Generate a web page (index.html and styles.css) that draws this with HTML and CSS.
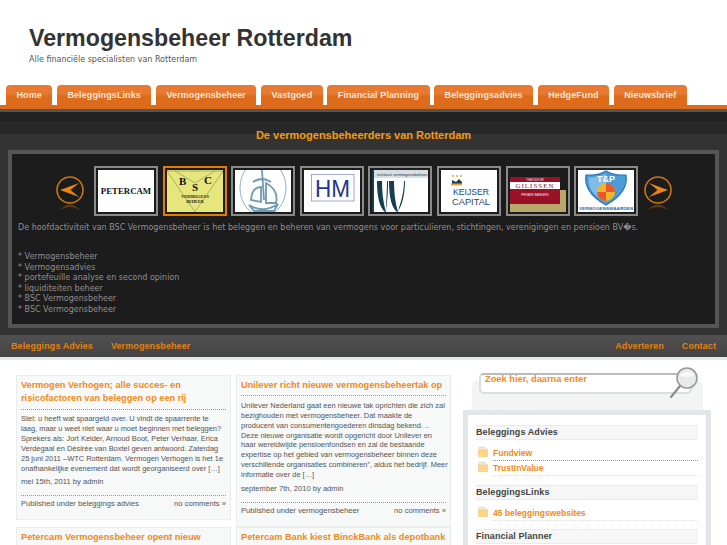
FILE: index.html
```html
<!DOCTYPE html>
<html lang="en">
  <head>
    <meta charset="UTF-8" />
    <title>Vermogensbeheer Rotterdam</title>
    <link rel="stylesheet" href="styles.css">
  </head>
  <body>
    <div class="page">
      <div class="header">
        <h1>Vermogensbeheer Rotterdam</h1>
        <p>Alle financiële specialisten van Rotterdam</p>
      </div>

      <ul class="tabs">
        <li>Home</li>
        <li>BeleggingsLinks</li>
        <li>Vermogensbeheer</li>
        <li>Vastgoed</li>
        <li>Financial Planning</li>
        <li>Beleggingsadvies</li>
        <li>HedgeFund</li>
        <li>Nieuwsbrief</li>
      </ul>

      <div class="featured">
        <h2>De vermogensbeheerders van Rotterdam</h2>
        <div class="featured-box">
          <div class="carousel">
            <svg class="arrow" width="30" height="36" viewBox="0 0 30 36">
              <circle cx="15" cy="15" r="13" fill="none" stroke="#c9770f" stroke-width="1.6" />
              <path d="M5 15 L24 8 L15.5 15 L24 22 Z" fill="#e8831a" />
              <path d="M5 35 Q15 24 25 35 Q15 29 5 35 Z" fill="#5a3a14" />
            </svg>
            <div class="logos">
              <div class="logo">
                <svg viewBox="0 0 56 42"><text x="28" y="24" text-anchor="middle" class="t-petercam">PETERCAM</text></svg>
              </div>
              <div class="logo logo-active">
                <svg viewBox="0 0 56 42">
                  <rect width="56" height="42" fill="#e6e67c" />
                  <path d="M0 1 H56 L28 42 Z M8 1 L28 13 L48 1 M24 1 L28 -2 L32 1" fill="none" stroke="#8a8a50" stroke-width="0.6" />
                  <text x="12" y="15" class="t-bsc">B</text>
                  <text x="25" y="21" class="t-bsc">S</text>
                  <text x="37" y="14" class="t-bsc">C</text>
                  <text x="28" y="27.5" text-anchor="middle" class="t-bsc-sub">VERMOGENS</text>
                  <text x="28" y="32.5" text-anchor="middle" class="t-bsc-sub">BEHEER</text>
                </svg>
              </div>
              <div class="logo">
                <svg viewBox="0 0 56 42">
                  <ellipse cx="28" cy="18" rx="23" ry="28" fill="none" stroke="#8fb2c6" stroke-width="1" />
                  <path d="M27 0 L29 30 M18 12 Q27 6 36 12 M16 30 Q17 17 26 17 L26 32 Z M31 13 Q44 20 41 33 L31 33 Z M14 35 Q28 44 43 34 L39 41 H19 Z" fill="none" stroke="#6f9ab3" stroke-width="1.8" />
                </svg>
              </div>
              <div class="logo">
                <svg viewBox="0 0 56 42">
                  <rect x="7.5" y="4.5" width="42.5" height="26.5" fill="none" stroke="#8a94c8" stroke-width="0.8" />
                  <text x="11" y="27" textLength="35" lengthAdjust="spacingAndGlyphs" class="t-hm">HM</text>
                </svg>
              </div>
              <div class="logo">
                <svg viewBox="0 0 56 42">
                  <rect width="56" height="8" fill="#d5e0e4" />
                  <text x="5" y="5.5" class="t-ivv-top">instituut vermogensbeheer</text>
                  <rect x="0" y="0" width="2" height="42" fill="#143f50" />
                  <path d="M5 11 C5 28 8 38 13 42 L14 42 C11 32 10 22 10 11 Z M17 11 C17 28 20 38 25 42 L26 42 C23 32 22 22 22 11 Z M15 11 L16 11 C16 24 15 34 14 41 C14 32 15 20 15 11 Z M32 11 L33 11 C33 24 30 36 26 41 C29 32 32 22 32 11 Z" fill="#143f50" />
                </svg>
              </div>
              <div class="logo">
                <svg viewBox="0 0 56 42">
                  <path d="M11 15 V10 L15 12 L18 9 L21 12 V15 Z" fill="#1f3a5a" />
                  <rect x="10" y="13.5" width="11" height="2" fill="#e2a92c" />
                  <circle cx="12" cy="6" r="1" fill="#e2a92c" />
                  <circle cx="16" cy="6" r="1" fill="#e2a92c" />
                  <circle cx="20" cy="6" r="1" fill="#e2a92c" />
                  <text x="12" y="24.5" textLength="36" lengthAdjust="spacingAndGlyphs" class="t-keijser">KEIJSER</text>
                  <text x="11" y="35" textLength="38" lengthAdjust="spacingAndGlyphs" class="t-keijser">CAPITAL</text>
                </svg>
              </div>
              <div class="logo logo-dark">
                <svg viewBox="0 0 56 42">
                  <rect x="0" y="20" width="56" height="22" fill="#b9a86c" />
                  <rect x="0" y="7" width="50" height="27" fill="#9a1027" />
                  <rect x="0" y="12" width="50" height="7" fill="#fff" />
                  <text x="25" y="10.8" text-anchor="middle" class="t-gil-sm">THEODOOR</text>
                  <text x="25" y="18" text-anchor="middle" class="t-gil">GILISSEN</text>
                  <text x="25" y="26" text-anchor="middle" class="t-gil-sm">PRIVATE BANKERS</text>
                </svg>
              </div>
              <div class="logo">
                <svg viewBox="0 0 56 42">
                  <path d="M8 5 Q20 6 28 1 Q36 6 48 5 Q51 22 28 35 Q5 22 8 5 Z" fill="#4b9bd8" stroke="#2a78bb" stroke-width="1.2" />
                  <path d="M11 7 Q20 8 28 4 L28 32 Q8 22 11 7 Z" fill="#7fbde8" />
                  <text x="28" y="12" text-anchor="middle" class="t-tp">T&amp;P</text>
                  <circle cx="28" cy="22" r="9" fill="#f0b429" />
                  <path d="M28 22 L28 13 A9 9 0 0 1 37 22 Z M28 22 L28 31 A9 9 0 0 1 19 22 Z" fill="#e8582a" />
                  <text x="1" y="40" textLength="54" lengthAdjust="spacingAndGlyphs" class="t-tp-sub">VERMOGENSWAARDEN</text>
                </svg>
              </div>
            </div>
            <svg class="arrow arrow-next" width="30" height="36" viewBox="0 0 30 36">
              <circle cx="15" cy="15" r="13" fill="none" stroke="#c9770f" stroke-width="1.6" />
              <path d="M25 15 L6 8 L14.5 15 L6 22 Z" fill="#e8831a" />
              <path d="M5 35 Q15 24 25 35 Q15 29 5 35 Z" fill="#5a3a14" />
            </svg>
          </div>
          <p class="intro">De hoofdactiviteit van BSC Vermogensbeheer is het beleggen en beheren van vermogens voor particulieren, stichtingen, verenigingen en pensioen BV�s.</p>
          <ul class="services">
            <li>Vermogensbeheer</li>
            <li>Vermogensadvies</li>
            <li>portefeuille analyse en second opinion</li>
            <li>liquiditeiten beheer</li>
            <li>BSC Vermogensbeheer</li>
            <li>BSC Vermogensbeheer</li>
          </ul>
        </div>
      </div>

      <div class="subnav">
        <a>Beleggings Advies</a>
        <a>Vermogensbeheer</a>
        <a class="push">Adverteren</a>
        <a>Contact</a>
      </div>

      <div class="content">
        <div class="posts">
          <div class="post">
            <h3>Vermogen Verhogen; alle succes- en<br />risicofactoren van beleggen op een rij</h3>
            <p>Stel: u heeft wat spaargeld over. U vindt de spaarrente te<br />laag, maar u weet niet waar u moet beginnen met beleggen?<br />Sprekers als: Jort Kelder, Arnoud Boot, Peter Verhaar, Erica<br />Verdegaal en Désirée van Boxtel geven antwoord. Zaterdag<br />25 juni 2011 –WTC Rotterdam. Vermogen Verhogen is het 1e<br />onafhankelijke evenement dat wordt georganiseerd over […]</p>
            <div class="meta">mei 15th, 2011 by admin</div>
            <div class="post-foot"><span>Published under beleggings advies</span><span>no comments »</span></div>
          </div>
          <div class="post">
            <h3>Unilever richt nieuwe vermogensbeheertak op</h3>
            <p>Unilever Nederland gaat een nieuwe tak oprichten die zich zal<br />bezighouden met vermogensbeheer. Dat maakte de<br />producent van consumentengoederen dinsdag bekend. ..<br />Deze nieuwe organisatie wordt opgericht door Unilever en<br />haar wereldwijde pensioenfondsen en zal de bestaande<br />expertise op het gebied van vermogensbeheer binnen deze<br />verschillende organisaties combineren”, aldus het bedrijf. Meer<br />informatie over de […]</p>
            <div class="meta">september 7th, 2010 by admin</div>
            <div class="post-foot"><span>Published under vermogensbeheer</span><span>no comments »</span></div>
          </div>
          <div class="post">
            <h3>Petercam Vermogensbeheer opent nieuw</h3>
          </div>
          <div class="post">
            <h3>Petercam Bank kiest BinckBank als depotbank</h3>
          </div>
        </div>

        <div class="sidebar">
          <div class="search-panel">
            <div class="search">Zoek hier, daarna enter</div>
            <svg class="lens" width="30" height="34" viewBox="0 0 30 34">
              <line x1="11" y1="20" x2="2" y2="31" stroke="#8b8b8b" stroke-width="2.2" stroke-linecap="round" />
              <circle cx="18" cy="12" r="10" fill="#e9ebea" stroke="#9a9a9a" stroke-width="1.6" />
              <path d="M10 9 Q18 3 26 9 Q18 13 10 9 Z" fill="#fff" opacity="0.7" />
            </svg>
          </div>
          <div class="widgets">
            <h4>Beleggings Advies</h4>
            <ul class="links">
              <li>
                <svg width="10" height="11" viewBox="0 0 10 11"><path d="M1 1 H6 L9 3 V5 H1 Z" fill="#efe9da" stroke="#ddd3bd" stroke-width="0.6" /><path d="M0.5 4 H9.5 V10.5 H0.5 Z" fill="#fcd788" stroke="#f0c56c" stroke-width="0.6" /></svg>
                <span>Fundview</span>
              </li>
              <li>
                <svg width="10" height="11" viewBox="0 0 10 11"><path d="M1 1 H6 L9 3 V5 H1 Z" fill="#efe9da" stroke="#ddd3bd" stroke-width="0.6" /><path d="M0.5 4 H9.5 V10.5 H0.5 Z" fill="#fcd788" stroke="#f0c56c" stroke-width="0.6" /></svg>
                <span>TrustInValue</span>
              </li>
            </ul>
            <h4>BeleggingsLinks</h4>
            <ul class="links">
              <li>
                <svg width="10" height="11" viewBox="0 0 10 11"><path d="M1 1 H6 L9 3 V5 H1 Z" fill="#efe9da" stroke="#ddd3bd" stroke-width="0.6" /><path d="M0.5 4 H9.5 V10.5 H0.5 Z" fill="#fcd788" stroke="#f0c56c" stroke-width="0.6" /></svg>
                <span>45 beleggingswebsites</span>
              </li>
            </ul>
            <h4>Financial Planner</h4>
          </div>
        </div>
      </div>
    </div>
  </body>
</html>
```

FILE: styles.css
```css
html,
body {
  margin: 0;
  padding: 0;
  background: #fff;
  overflow: hidden;
}

.page {
  width: 727px;
  height: 545px;
  overflow: hidden;
  font-family: 'Liberation Sans', Arial, sans-serif;
}

.header {
  height: 85px;
  padding-left: 29px;
  box-sizing: border-box;
  padding-top: 24px;
}
.header h1 {
  margin: 0;
  font-size: 23.2px;
  line-height: 28px;
  color: #333;
}
.header p {
  margin: 2px 0 0;
  font-family: 'DejaVu Sans', sans-serif;
  font-size: 8px;
  line-height: 12px;
  color: #555;
}

.tabs {
  display: flex;
  gap: 4.5px;
  margin: 0;
  padding: 0 0 0 6px;
  list-style: none;
  height: 20px;
  border-bottom: 4px solid #dd6b1c;
}
.tabs li {
  padding: 0 10.5px;
  height: 20px;
  line-height: 20px;
  white-space: nowrap;
  border-radius: 4px 4px 0 0;
  background: linear-gradient(#e77a30 0, #e77a30 45%, #dd6b1c 55%, #dd6b1c 100%);
  color: #f3e7dc;
  font-size: 9px;
  font-weight: bold;
  letter-spacing: 0.1px;
}

.featured {
  height: 226px;
  box-sizing: border-box;
  border-top: 3px solid #555;
  background: linear-gradient(#222 0, #222 9px, #282828 9px, #282828 22px, #333 22px, #333 100%);
  padding: 0 8px;
}
.featured h2 {
  margin: 0;
  padding-top: 16px;
  height: 38px;
  box-sizing: border-box;
  text-align: center;
  font-size: 11px;
  line-height: 15px;
  color: #f39a12;
}
.featured-box {
  height: 178px;
  box-sizing: border-box;
  border: 4px solid #555;
  background: #1c1c1c;
  padding: 12px 6px 0;
}

.carousel {
  display: flex;
  align-items: flex-start;
  padding: 0 36px 0 37px;
}
.arrow {
  margin-top: 9px;
  flex: none;
}
.arrow-next {
  margin-left: auto;
}
.logos {
  display: flex;
  gap: 4.6px;
  margin-left: 9px;
}
.logo {
  width: 64px;
  height: 50px;
  box-sizing: border-box;
  border: 2px solid #8a8a8a;
  padding: 2px;
  background: #1c1c1c;
}
.logo svg {
  display: block;
  width: 56px;
  height: 42px;
  background: #fff;
}
.logo-active {
  border-color: #e37b06;
}
.logo-dark svg {
  background: #1c1c1c;
}

.t-petercam { font-family: 'Liberation Serif', serif; font-size: 8.8px; font-weight: bold; fill: #111; }
.t-bsc { font-family: 'Liberation Serif', serif; font-size: 11px; font-weight: bold; fill: #111; }
.t-bsc-sub { font-family: 'Liberation Serif', serif; font-size: 4.2px; font-weight: bold; fill: #222; }
.t-hm { font-family: 'Liberation Sans', sans-serif; font-size: 24px; fill: #1f3592; }
.t-ivv-top { font-family: 'Liberation Sans', sans-serif; font-size: 4.3px; fill: #334; }
.t-keijser { font-family: 'Liberation Sans', sans-serif; font-size: 9px; fill: #2a4564; }
.t-gil { font-family: 'Liberation Serif', serif; font-size: 7px; fill: #8e1a2c; letter-spacing: 1px; }
.t-gil-sm { font-family: 'Liberation Sans', sans-serif; font-size: 3px; fill: #eee; }
.t-tp { font-family: 'Liberation Sans', sans-serif; font-size: 9px; font-weight: bold; fill: #fff; }
.t-tp-sub { font-family: 'Liberation Sans', sans-serif; font-size: 3.6px; font-weight: bold; fill: #2a6db0; }

.intro,
.services {
  font-family: 'DejaVu Sans', sans-serif;
  font-size: 8px;
  color: #8f8f8f;
}
.intro {
  margin: 6px 0 0;
  line-height: 12px;
  white-space: nowrap;
}
.services {
  margin: 18px 0 0;
  padding: 0;
  list-style: none;
  line-height: 10.6px;
}
.services li::before {
  content: '* ';
}

.subnav {
  display: flex;
  gap: 18px;
  height: 22px;
  padding: 0 11px;
  background: linear-gradient(#505050, #444);
  border-bottom: 3px solid #e4e7e9;
  font-size: 9px;
  font-weight: bold;
  line-height: 22px;
  letter-spacing: 0.1px;
  color: #e2810f;
}
.push {
  margin-left: auto;
}

.content {
  display: flex;
  padding: 15px 16px 0;
}

.posts {
  display: grid;
  grid-template-columns: 215px 215px;
  grid-auto-rows: 147px;
  gap: 5px;
  align-items: start;
  width: 447px;
  flex: none;
}
.post {
  box-sizing: border-box;
  background: #f7f8f8;
  border: 1px solid #ebeded;
  padding: 3px 4px 0;
  font-size: 7.6px;
  color: #555;
}
.post h3 {
  margin: 0;
  padding-bottom: 3px;
  border-bottom: 1px dotted #999;
  font-size: 9.2px;
  line-height: 13.3px;
  white-space: nowrap;
  color: #f08c1a;
}
.post p {
  margin: 4.5px 0 0;
  font-size: 7.45px;
  line-height: 9.9px;
  white-space: nowrap;
}
.meta {
  margin: 2.5px 0 0;
  padding-bottom: 7px;
  line-height: 12px;
  border-bottom: 1px dotted #999;
}
.post-foot {
  display: flex;
  justify-content: space-between;
  line-height: 13px;
  padding: 1px 0 9px;
}

.sidebar {
  width: 248px;
  position: relative;
}
.search-panel {
  height: 29px;
  margin: 6px 8px 0 9px;
  background: #f3f4f4;
  border-radius: 5px 5px 0 0;
}
.search {
  position: relative;
  top: -8px;
  left: 7px;
  width: 213px;
  height: 21px;
  box-sizing: border-box;
  background: #fff;
  border: 2px solid #ddd;
  border-top-color: #bbb;
  border-radius: 5px;
  padding-left: 4px;
  font-size: 9.3px;
  font-weight: bold;
  line-height: 9px;
  color: #f08c1a;
}
.lens {
  position: absolute;
  left: 206px;
  top: -9px;
}

.widgets {
  border: 5px solid #e3e6e8;
  background: #fff;
  padding: 10px 8px 0;
  height: 200px;
}
.widgets h4 {
  margin: 0;
  height: 15px;
  box-sizing: border-box;
  background: #f6f6f6;
  border-top: 1px solid #eaeaea;
  border-bottom: 1px solid #eaeaea;
  font-size: 9px;
  line-height: 13px;
  letter-spacing: 0.1px;
  color: #444;
}
.links {
  margin: 6px 0 8.5px;
  padding: 0;
  list-style: none;
}
.links li {
  display: flex;
  gap: 5px;
  padding-left: 2px;
  font-size: 8.5px;
  font-weight: bold;
  color: #f08c1a;
}
.links li svg {
  flex: none;
}
.links li span {
  flex: 1;
  height: 14px;
  line-height: 14px;
  border-bottom: 1px dotted #999;
}
.links li:last-child span {
  border-bottom-color: #ddd;
}
```
